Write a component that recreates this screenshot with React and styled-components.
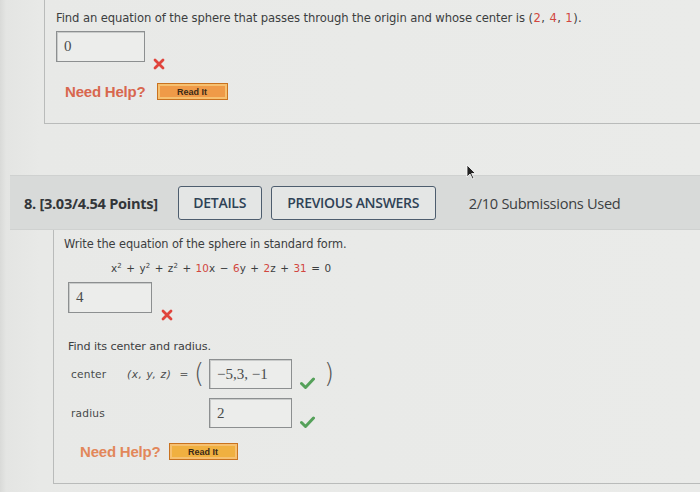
import React from "react";
import styled, { createGlobalStyle } from "styled-components";

const Global = createGlobalStyle`
  html, body { margin: 0; padding: 0; }
  body {
    background: #e7e8e6;
    font-family: "DejaVu Sans", Verdana, sans-serif;
    color: #3b3d3e;
    width: 700px;
    height: 492px;
    overflow: hidden;
  }
`;

const Page = styled.div`
  position: relative;
  width: 700px;
  height: 492px;
  display: flex;
  flex-direction: column;
  background: linear-gradient(90deg, #d9dad8 0px, #e4e5e3 6px, #e8e9e7 40px, #eaebe9 700px);
`;

const Panel = styled.section`
  margin-left: ${(p) => p.$left}px;
  height: ${(p) => p.$height}px;
  box-sizing: border-box;
  border-left: 1px solid #b9bbba;
  border-bottom: 1px solid #b9bbba;
  padding: ${(p) => p.$pad};
  display: flex;
  flex-direction: column;
  align-items: flex-start;
`;

const Prompt = styled.p`
  margin: ${(p) => p.$m || "0"};
  font-size: ${(p) => p.$fs || 11.4}px;
  line-height: 14px;
  color: #3c3e3f;
  letter-spacing: -0.1px;
`;

const Red = styled.span`
  color: #d2463e;
`;

const AnswerRow = styled.div`
  display: flex;
  align-items: flex-end;
  gap: 8px;
  margin-top: ${(p) => p.$mt || 0}px;
  margin-left: ${(p) => p.$ml || 0}px;
`;

const Box = styled.div`
  box-sizing: border-box;
  width: ${(p) => p.$w}px;
  height: ${(p) => p.$h}px;
  border: 1px solid #8c8f90;
  box-shadow: inset 1px 1px 0 #c9cbca;
  background: #ecedeb;
  font-family: "Liberation Serif", "DejaVu Serif", serif;
  font-size: 15px;
  color: #4a4c4d;
  display: flex;
  align-items: center;
  padding-left: 7px;
`;

const Mark = styled.span`
  display: inline-flex;
  margin-bottom: ${(p) => p.$mb || 0}px;
  margin-left: ${(p) => p.$ml || 0}px;
`;

const HelpRow = styled.div`
  display: flex;
  align-items: center;
  gap: ${(p) => p.$gap}px;
  margin-top: ${(p) => p.$mt}px;
  margin-left: ${(p) => p.$ml}px;
`;

const HelpText = styled.span`
  font-family: "Liberation Sans", Arial, sans-serif;
  font-size: 15px;
  font-weight: 700;
  color: ${(p) => p.$color};
  letter-spacing: -0.2px;
`;

const ReadIt = styled.button`
  box-sizing: border-box;
  width: ${(p) => p.$w}px;
  height: 17px;
  padding: 0;
  background: ${(p) => p.$bg};
  border: 1px solid #c9721f;
  box-shadow: inset 0 0 0 2px #f6c070;
  font-family: "Liberation Sans", Arial, sans-serif;
  font-weight: 700;
  font-size: 9px;
  color: #3a2a18;
  display: flex;
  align-items: center;
  justify-content: center;
`;

const HeaderBar = styled.header`
  margin-top: 51px;
  margin-left: 10px;
  height: 53px;
  background: #d8dad9;
  border-top: 1px solid #cfd1d0;
  border-bottom: 1px solid #cfd1d0;
  display: flex;
  align-items: center;
  padding-left: 14px;
  font-family: "Open Sans", "Noto Sans", sans-serif;
`;

const Points = styled.span`
  font-size: 14.6px;
  font-weight: 700;
  color: #333639;
  letter-spacing: -0.3px;
  margin-right: 20px;
`;

const TabButton = styled.button`
  box-sizing: border-box;
  height: 34px;
  width: ${(p) => p.$w}px;
  margin-right: ${(p) => p.$mr}px;
  border: 1.5px solid #4d5d6e;
  border-radius: 3px;
  background: #e4e6e5;
  font-family: "Open Sans", "Noto Sans", sans-serif;
  font-size: 14px;
  font-weight: 600;
  color: #2f4256;
  letter-spacing: -0.3px;
  padding: 0;
`;

const Submissions = styled.span`
  font-size: 14.6px;
  color: #3c3f42;
  letter-spacing: -0.3px;
`;

const Equation = styled.div`
  margin-top: 11px;
  margin-left: 47px;
  font-size: 10.4px;
  color: #3c3e3f;
  word-spacing: 1px;
  letter-spacing: 0.1px;
  sup { font-size: 7px; line-height: 0; }
`;

const FieldGrid = styled.div`
  display: grid;
  grid-template-columns: 59px 82px 1fr;
  row-gap: 9px;
  margin-top: 5px;
  margin-left: 4px;
  align-items: center;
`;

const Label = styled.span`
  font-size: 10.6px;
  color: #47494a;
  letter-spacing: 0.2px;
  padding-left: 3px;
`;

const Coords = styled.span`
  display: flex;
  align-items: center;
  font-size: 10.6px;
  color: #4a4c4d;
  font-style: italic;
  letter-spacing: 0.6px;
`;

const Eq = styled.span`
  font-style: normal;
  margin: 0 5px 0 8px;
  color: #666;
`;

const Paren = styled.span`
  font-family: "DejaVu Sans", sans-serif;
  font-style: normal;
  font-weight: 300;
  font-size: 26px;
  color: #555;
  line-height: 1;
  margin: ${(p) => p.$m};
`;

const FieldCell = styled.div`
  display: flex;
  align-items: flex-end;
`;

const Cursor = styled.svg`
  position: absolute;
  left: 466px;
  top: 164px;
`;

const XMark = () => (
  <svg width="12" height="12" viewBox="0 0 12 12">
    <path d="M2 2 L10 10 M10 2 L2 10" stroke="#e0443c" strokeWidth="2.8" strokeLinecap="round" />
  </svg>
);

const Check = () => (
  <svg width="15" height="12" viewBox="0 0 15 12">
    <path d="M1.5 6.5 L5.5 10.5 L13.5 2" stroke="#55a15a" strokeWidth="3" fill="none" strokeLinecap="round" strokeLinejoin="round" />
  </svg>
);

export default function App() {
  return (
    <>
      <Global />
      <Page>
        <Panel $left={44} $height={124} $pad="11px 0 0 11px">
          <Prompt $fs={11.6}>
            Find an equation of the sphere that passes through the origin and whose center is{" "}
            <span style={{ letterSpacing: "0.4px" }}>
              (<Red>2</Red>, <Red>4</Red>, <Red>1</Red>).
            </span>
          </Prompt>
          <AnswerRow $mt={6}>
            <Box $w={89} $h={31}>0</Box>
            <Mark $ml={0} $mb={-8}><XMark /></Mark>
          </AnswerRow>
          <HelpRow $mt={21} $ml={9} $gap={11}>
            <HelpText $color="#d8674e">Need Help?</HelpText>
            <ReadIt $w={71} $bg="#ef9a48">Read It</ReadIt>
          </HelpRow>
        </Panel>

        <HeaderBar>
          <Points>8. [3.03/4.54 Points]</Points>
          <TabButton $w={84} $mr={9}>DETAILS</TabButton>
          <TabButton $w={165} $mr={33}>PREVIOUS ANSWERS</TabButton>
          <Submissions>2/10 Submissions Used</Submissions>
        </HeaderBar>

        <Panel $left={53} $height={254} $pad="7px 0 0 10px">
          <Prompt>Write the equation of the sphere in standard form.</Prompt>
          <Equation>
            x<sup>2</sup> + y<sup>2</sup> + z<sup>2</sup> + <Red>10</Red>x − <Red>6</Red>y + <Red>2</Red>z + <Red>31</Red> = 0
          </Equation>
          <AnswerRow $mt={8} $ml={4}>
            <Box $w={84} $h={31}>4</Box>
            <Mark $ml={1} $mb={-8}><XMark /></Mark>
          </AnswerRow>
          <Prompt $fs={11.2} $m="27px 0 0 4px">Find its center and radius.</Prompt>
          <FieldGrid>
            <Label>center</Label>
            <Coords>
              (x, y, z)<Eq>=</Eq>
              <Paren $m="0 0 3px 0">(</Paren>
            </Coords>
            <FieldCell>
              <Box $w={83} $h={30}>−5,3, −1</Box>
              <Mark $ml={8}><Check /></Mark>
              <Paren $m="0 0 3px 9px">)</Paren>
            </FieldCell>
            <Label>radius</Label>
            <span />
            <FieldCell>
              <Box $w={83} $h={30}>2</Box>
              <Mark $ml={8}><Check /></Mark>
            </FieldCell>
          </FieldGrid>
          <HelpRow $mt={15} $ml={16} $gap={8}>
            <HelpText $color="#e2875a">Need Help?</HelpText>
            <ReadIt $w={69} $bg="#f0b040">Read It</ReadIt>
          </HelpRow>
        </Panel>

        <Cursor width="10" height="16" viewBox="0 0 10 16">
          <path d="M1 1 L1 13 L4 10 L6.5 15 L8 14.3 L5.6 9.5 L9.5 9.5 Z" fill="#222" stroke="#fff" strokeWidth="0.8" />
        </Cursor>
      </Page>
    </>
  );
}
